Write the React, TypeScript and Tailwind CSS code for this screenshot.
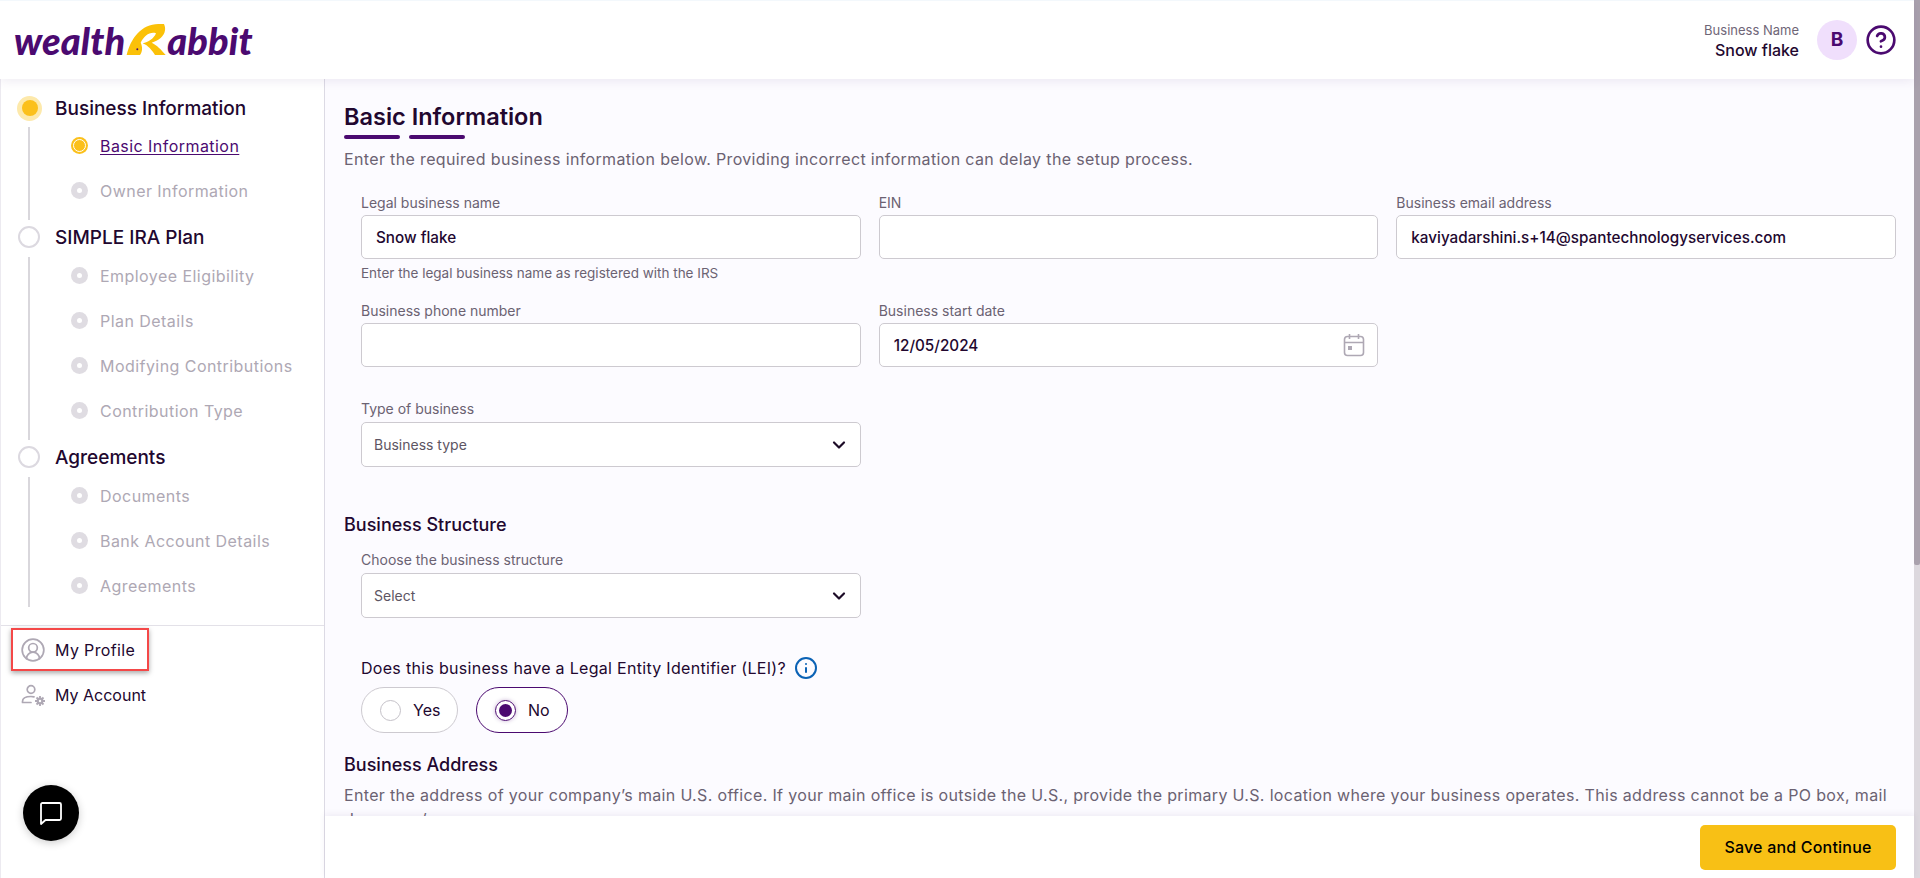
import { ChevronDown, CircleHelp, CircleUserRound, Info } from "lucide-react";

const groups = [
  { title: "Business Information", active: true, listClass: "mt-[2px] pb-[12px]", items: ["Basic Information", "Owner Information"] },
  { title: "SIMPLE IRA Plan", active: false, listClass: "mt-[3px] pb-[12px]", items: ["Employee Eligibility", "Plan Details", "Modifying Contributions", "Contribution Type"] },
  { title: "Agreements", active: false, listClass: "mt-[3px] pb-[4px]", items: ["Documents", "Bank Account Details", "Agreements"] },
];

function Logo() {
  return (
    <div className="flex items-end h-[38px] ml-[14px] text-[#4b0a70] italic font-black text-[38px] leading-[38px] tracking-[0.1px] font-['Lato',sans-serif]">
      <span>wealth</span>
      <svg width="42" height="34" viewBox="375 66 126 102" className="mb-[3px] shrink-0">
        <path
          d="M380 165 C392 115 425 72 475 72 L492 72 C498 85 497 100 482 114 C474 121 465 125 455 128 C470 135 485 150 497 165 L465 165 C455 150 445 137 428 130 C445 126 462 116 468 100 C450 94 432 108 422 128 C428 140 428 155 420 165 Z"
          fill="#fbc108"
        />
        <circle cx="412" cy="148" r="3" fill="#4b0a70" />
      </svg>
      <span>abbit</span>
    </div>
  );
}

function Field({ label, value, hint, children }: { label: string; value?: string; hint?: string; children?: React.ReactNode }) {
  return (
    <div className="flex flex-col">
      <span className="text-[14px] leading-[20px] text-[#6b6272] mb-[2px]">{label}</span>
      <div className="h-[44px] rounded-[5px] border border-[#cdcad0] bg-white flex items-center justify-between pl-[14px] pr-[12px] text-[15.25px] font-medium text-[#22072f]">
        <span className="pt-[2px]">{value}</span>
        {children}
      </div>
      {hint && <span className="text-[13.5px] leading-[18px] text-[#6b6272] mt-[5px]">{hint}</span>}
    </div>
  );
}

function SelectField({ label, value }: { label: string; value: string }) {
  return (
    <div className="flex flex-col">
      <span className="text-[14px] leading-[20px] text-[#6b6272] mb-[3px]">{label}</span>
      <div className="h-[45px] rounded-[5px] border border-[#cdcad0] bg-white flex items-center justify-between pl-[12px] pr-[11px] text-[14px] text-[#5d5563]">
        <span>{value}</span>
        <ChevronDown size={20} strokeWidth={2.6} className="text-[#1c0b26]" />
      </div>
    </div>
  );
}

export default function App() {
  return (
    <div className="h-[878px] w-[1920px] overflow-hidden flex bg-white text-[#22072f] font-['Inter',sans-serif]">
      <div className="flex-1 min-w-0 flex flex-col">
        <header className="h-[79px] shrink-0 bg-white border-t border-[#f3f8fc] flex items-center justify-between pr-[17px] shadow-[0_2px_10px_rgba(90,60,130,0.1)] relative z-10">
          <Logo />
          <div className="flex items-center">
            <div className="flex flex-col items-end mr-[18px]">
              <span className="text-[13px] leading-[20px] text-[#6f6677]">Business Name</span>
              <span className="text-[16px] leading-[21px] font-medium text-[#22072f]">Snow flake</span>
            </div>
            <div className="w-[40px] h-[40px] rounded-full bg-[#f0dffc] flex items-center justify-center text-[#4b0a70] font-bold text-[19px]">B</div>
            <CircleHelp size={32} strokeWidth={2} className="text-[#4b0a70] ml-[8px]" />
          </div>
        </header>
        <div className="flex-1 min-h-0 flex">
          <aside className="w-[325px] shrink-0 bg-white border-l border-r border-l-[#eceaf0] border-r-[#dcdae4] flex flex-col relative">
            <nav className="pt-[12px] h-[546px] shrink-0">
              {groups.map((g) => (
                <div key={g.title}>
                  <div className="flex items-center h-[34px]">
                    {g.active ? (
                      <span className="ml-[16px] w-[25px] h-[25px] rounded-full bg-[#fde9ab] flex items-center justify-center">
                        <span className="w-[16px] h-[16px] rounded-full bg-[#fbc01b]" />
                      </span>
                    ) : (
                      <span className="ml-[17px] w-[22px] h-[22px] rounded-full bg-white border-2 border-[#dcd9e0]" />
                    )}
                    <span className={`pt-[2px] text-[19px] font-medium text-[#22072f] ${g.active ? "ml-[13px]" : "ml-[15px]"}`}>{g.title}</span>
                  </div>
                  <ul className={`ml-[27px] border-l-2 border-[#d9d7dc] flex flex-col gap-[9px] ${g.listClass}`}>
                    {g.items.map((it, i) => (
                      <li key={it} className="h-[36px] flex items-center pl-[41px]">
                        {g.active && i === 0 ? (
                          <span className="w-[17px] h-[17px] rounded-full bg-[#fbc01b] flex items-center justify-center">
                            <span className="w-[13px] h-[13px] rounded-full border border-white" />
                          </span>
                        ) : (
                          <span className="w-[17px] h-[17px] rounded-full bg-[#dfdce2] flex items-center justify-center">
                            <span className="w-[5px] h-[5px] rounded-full bg-white" />
                          </span>
                        )}
                        <span className={`ml-[12px] pt-[1px] text-[16px] tracking-[0.45px] ${g.active && i === 0 ? "text-[#4b0a70] underline underline-offset-2" : "text-[#aea8b4]"}`}>{it}</span>
                      </li>
                    ))}
                  </ul>
                </div>
              ))}
            </nav>
            <div className="border-t border-[#e3e1e8] pt-[2px] pl-[10px]">
              <div className="w-[138px] h-[43px] border-[2.5px] border-[#f44848] shadow-[0_2px_5px_rgba(0,0,0,0.35)] flex items-center pl-[7px]">
                <CircleUserRound size={26} strokeWidth={1.6} className="text-[#aea8b4]" />
                <span className="ml-[9px] text-[16px] tracking-[0.35px] text-[#22072f]">My Profile</span>
              </div>
              <div className="h-[45px] flex items-center pl-[10px] mt-[1px]">
                <svg width="26" height="24" viewBox="0 0 26 24" fill="none" stroke="#aea8b4" strokeWidth="1.7">
                  <circle cx="10" cy="6.5" r="3.8" />
                  <path d="M1.5 19.5v-1c0-3 3-5 8.5-5 1 0 2 .1 3 .3M1.5 19.5H10" strokeLinecap="round" />
                  <circle cx="19" cy="18" r="3.4" fill="#aea8b4" stroke="none" />
                  <path d="M19 13v10M14 18h10M15.5 14.5l7 7M22.5 14.5l-7 7" strokeWidth="1.8" />
                  <circle cx="19" cy="18" r="1.2" fill="#fff" stroke="none" />
                </svg>
                <span className="ml-[8px] text-[16px] text-[#22072f]">My Account</span>
              </div>
            </div>
            <button className="absolute left-[22px] top-[706px] w-[56px] h-[56px] rounded-full bg-black flex items-center justify-center shadow-[0_2px_8px_rgba(0,0,0,0.2)]">
              <svg width="24" height="24" viewBox="0 0 24 24" fill="none" stroke="#fff" strokeWidth="1.8" strokeLinejoin="round">
                <path d="M2 3.5C2 2.700 2.700 2 3.500 2h17c.8 0 1.500.7 1.500 1.500v14c0 .8-.7 1.500-1.500 1.500H6.500L2 23z" />
              </svg>
            </button>
          </aside>
          <div className="flex-1 min-w-0 flex flex-col">
            <main className="flex-1 min-h-0 overflow-hidden bg-[#fcfbff] pl-[19px] pr-[18px] pt-[22px]">
              <h1 className="text-[23.5px] leading-[32px] font-semibold text-[#22072f]">Basic Information</h1>
              <div className="flex gap-[9px] mt-[2px]">
                <span className="w-[56px] h-[4px] rounded-full bg-[#4b0a70]" />
                <span className="w-[56px] h-[4px] rounded-full bg-[#4b0a70]" />
              </div>
              <p className="text-[16px] leading-[24px] tracking-[0.35px] text-[#6b6272] mt-[8px]">Enter the required business information below. Providing incorrect information can delay the setup process.</p>
              <div className="pl-[17px] mt-[22px]">
                <div className="grid grid-cols-3 gap-x-[18px]">
                  <Field label="Legal business name" value="Snow flake" hint="Enter the legal business name as registered with the IRS" />
                  <Field label="EIN" />
                  <Field label="Business email address" value="kaviyadarshini.s+14@spantechnologyservices.com" />
                </div>
                <div className="grid grid-cols-3 gap-x-[18px] mt-[19px]">
                  <Field label="Business phone number" />
                  <Field label="Business start date" value="12/05/2024">
                    <svg width="22" height="24" viewBox="0 0 22 24" fill="none" stroke="#aea8b4" strokeWidth="1.6">
                      <rect x="1.5" y="3.5" width="19" height="19" rx="3" />
                      <path d="M1.500 9.500h19M6.500 1v5M15.500 1v5" />
                      <rect x="5" y="13" width="4" height="4" fill="#aea8b4" stroke="none" />
                    </svg>
                  </Field>
                </div>
                <div className="grid grid-cols-3 gap-x-[18px] mt-[32px]">
                  <SelectField label="Type of business" value="Business type" />
                </div>
              </div>
              <h2 className="text-[18px] leading-[26px] font-medium mt-[45px] text-[#22072f]">Business Structure</h2>
              <div className="pl-[17px] mt-[12px]">
                <div className="grid grid-cols-3 gap-x-[18px]">
                  <SelectField label="Choose the business structure" value="Select" />
                </div>
                <div className="flex items-center mt-[38px] h-[24px] text-[16px] tracking-[0.3px] text-[#22072f]">
                  <span>Does this business have a Legal Entity Identifier (LEI)?</span>
                  <Info size={24} strokeWidth={2} className="text-[#0b62b5] ml-[8px]" />
                </div>
                <div className="flex gap-[18px] mt-[7px]">
                  <div className="w-[97px] h-[46px] rounded-full border border-[#cdcad0] bg-white flex items-center pl-[18px]">
                    <span className="w-[21px] h-[21px] rounded-full border border-[#c4c1c8] bg-white" />
                    <span className="ml-[12px] text-[16px]">Yes</span>
                  </div>
                  <div className="w-[92px] h-[46px] rounded-full border border-[#4b0a70] bg-white flex items-center pl-[18px]">
                    <span className="w-[21px] h-[21px] rounded-full border border-[#4b0a70] flex items-center justify-center shadow-[0_0_4px_rgba(75,10,112,0.3)]">
                      <span className="w-[13px] h-[13px] rounded-full bg-[#4b0a70]" />
                    </span>
                    <span className="ml-[12px] text-[16px]">No</span>
                  </div>
                </div>
              </div>
              <h2 className="text-[18px] leading-[26px] font-medium mt-[19px] text-[#22072f]">Business Address</h2>
              <p className="text-[16px] leading-[24px] tracking-[0.34px] text-[#6b6272] mt-[5px]">Enter the address of your company’s main U.S. office. If your main office is outside the U.S., provide the primary U.S. location where your business operates. This address cannot be a PO box, mail drop, or c/o.</p>
            </main>
            <footer className="h-[62px] shrink-0 bg-white flex items-center justify-end pr-[18px] shadow-[0_-2px_6px_rgba(90,60,130,0.08)] relative">
              <button className="w-[196px] h-[45px] rounded-[5px] bg-[#f8c015] text-[16px] tracking-[0.2px] font-medium text-black">Save and Continue</button>
            </footer>
          </div>
        </div>
      </div>
      <div className="w-[6px] shrink-0 bg-[#dcd8de] flex flex-col">
        <div className="h-[565px] bg-[#a9a1ad] rounded-b-[2px]" />
      </div>
    </div>
  );
}
